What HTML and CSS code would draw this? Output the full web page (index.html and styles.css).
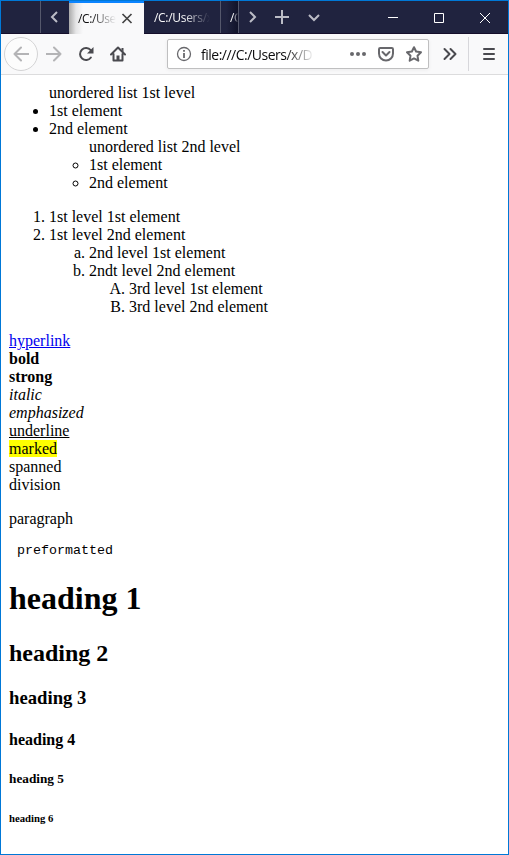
FILE: index.html
```html
<!DOCTYPE html>
<html lang="en">
<head>
<meta charset="utf-8">
<title>HTML elements</title>
<link rel="stylesheet" href="styles.css">
</head>
<body>
<div class="window">
  <header class="tabbar">
    <div class="drag"></div>
    <button class="scroll-left"><svg width="28" height="32" viewBox="0 0 28 32"><path d="M16 11l-5 5 5 5"/></svg></button>
    <div class="tab active"><span class="label">/C:/Use</span><svg width="12" height="12" viewBox="0 0 12 12"><path d="M1.500 1l9 9M10.500 1l-9 9"/></svg></div>
    <div class="tab second"><span class="label">/C:/Users/x</span></div>
    <div class="tab third"><span class="label">/C</span></div>
    <button class="scroll-right"><svg width="28" height="32" viewBox="0 0 28 32"><path d="M11 11l5 5-5 5"/></svg></button>
    <button class="tab-tool"><svg width="32" height="32" viewBox="0 0 32 32"><path d="M15 9v14M8 16h14"/></svg></button>
    <button class="tab-tool"><svg width="32" height="32" viewBox="0 0 32 32"><path d="M10 14l5 5 5-5"/></svg></button>
    <div class="controls">
      <button><svg width="46" height="32" viewBox="0 0 46 32"><path d="M18 16.500h10"/></svg></button>
      <button><svg width="46" height="32" viewBox="0 0 46 32"><path d="M18.500 12.500h9v9h-9z"/></svg></button>
      <button><svg width="46" height="32" viewBox="0 0 46 32"><path d="M18 12l10 10M28 12l-10 10"/></svg></button>
    </div>
  </header>

  <nav class="toolbar">
    <button class="back"><svg width="16" height="16" viewBox="0 0 16 16"><path d="M15.500 8H1.500M8 1.500L1.500 8 8 14.500"/></svg></button>
    <button class="tool dim"><svg width="16" height="16" viewBox="0 0 16 16"><path d="M.5 8h14M8 1.500L14.500 8 8 14.500"/></svg></button>
    <button class="tool"><svg width="16" height="16" viewBox="0 0 16 16"><path d="M12.900 11.500A6 6 0 1 1 12.700 4.200"/><path class="solid" d="M15.500 1v6.500H9z"/></svg></button>
    <button class="tool"><svg width="16" height="16" viewBox="0 0 16 16"><path d="M1 8.500L8 1.500l7 7M3.500 8v6.500h9V8"/><path class="solid" d="M6.500 9.500h3V15h-3zM11.500 2h2v4l-2-2z"/></svg></button>
    <div class="urlbar">
      <svg class="info" width="16" height="16" viewBox="0 0 16 16"><circle cx="8" cy="8" r="6.500"/><path d="M8 7v5M8 4v1.800"/></svg>
      <span class="address">file:///C:/Users/x/D</span>
      <svg class="dots" width="16" height="16" viewBox="0 0 16 16"><circle cx="2" cy="8" r="2"/><circle cx="8" cy="8" r="2"/><circle cx="14" cy="8" r="2"/></svg>
      <svg width="16" height="16" viewBox="0 0 16 16"><path d="M2.200 2h11.600q1.200 0 1.200 1.200V7.500a7 7 0 0 1-14 0V3.200Q1 2 2.200 2z"/><path d="M4.500 6L8 9.500 11.500 6"/></svg>
      <svg width="16" height="16" viewBox="0 0 16 16"><path d="M8 1.200l2.100 4.300 4.900.7-3.500 3.500.8 5L8 12.400l-4.300 2.300.8-5L1 6.200l4.900-.7z"/></svg>
    </div>
    <button class="overflow"><svg width="16" height="16" viewBox="0 0 16 16"><path d="M2.500 3L7.500 8l-5 5M8.500 3l5 5-5 5"/></svg></button>
    <button class="menu"><svg width="16" height="16" viewBox="0 0 16 16"><path d="M3 3h10M3 8h10M3 13h10"/></svg></button>
  </nav>

  <main class="page">
    <ul>
      unordered list 1st level
      <li>1st element</li>
      <li>2nd element
        <ul>
          unordered list 2nd level
          <li>1st element</li>
          <li>2nd element</li>
        </ul>
      </li>
    </ul>
    <ol>
      <li>1st level 1st element</li>
      <li>1st level 2nd element
        <ol type="a">
          <li>2nd level 1st element</li>
          <li>2ndt level 2nd element
            <ol type="A">
              <li>3rd level 1st element</li>
              <li>3rd level 2nd element</li>
            </ol>
          </li>
        </ol>
      </li>
    </ol>
    <a href="#">hyperlink</a><br>
    <b>bold</b><br>
    <strong>strong</strong><br>
    <i>italic</i><br>
    <em>emphasized</em><br>
    <u>underline</u><br>
    <mark>marked</mark><br>
    <span>spanned</span>
    <div>division</div>
    <p>paragraph</p>
    <pre> preformatted</pre>
    <h1>heading 1</h1>
    <h2>heading 2</h2>
    <h3>heading 3</h3>
    <h4>heading 4</h4>
    <h5>heading 5</h5>
    <h6>heading 6</h6>
  </main>
</div>
</body>
</html>
```
FILE: styles.css
```css
* { box-sizing: border-box; }
body { margin: 0; }
.window {
  display: flex;
  flex-direction: column;
  width: 509px;
  height: 855px;
  border: 1px solid #0078d7;
  background: #fff;
  overflow: hidden;
}
svg { display: block; flex: none; fill: none; stroke: currentColor; }
button { border: 0; padding: 0; background: none; color: inherit; }

.tabbar {
  display: flex;
  flex: none;
  height: 33px;
  background: #20233f;
  border-bottom: 1px solid #150f2b;
  color: #bbbcc6;
  font: 12px "Open Sans", "Noto Sans", sans-serif;
}
.tabbar svg { stroke-width: 2; }
.drag { width: 40px; border-right: 1px solid #55586c; }
.scroll-left { width: 28px; }
.tab { display: flex; align-items: center; }
.label {
  flex: none;
  white-space: nowrap;
  letter-spacing: -0.3px;
}
.tab.active {
  width: 75px;
  height: 33px;
  padding: 0 11px 0 9px;
  justify-content: space-between;
  border-top: 2px solid #0a84ff;
  background: linear-gradient(90deg, #aaa, #e6e6e7 7px, #f9f9fa 14px);
  color: #0c0c0d;
}
.tab.active .label {
  letter-spacing: -0.4px;
  -webkit-mask-image: linear-gradient(90deg, #000 35%, transparent);
  mask-image: linear-gradient(90deg, #000 35%, transparent);
}
.tab.active svg { color: #444; stroke-width: 1.7; }
.tab.second {
  width: 77px;
  padding-left: 10px;
  border-right: 1px solid #55586c;
  color: #f9f9fa;
}
.tab.second .label {
  -webkit-mask-image: linear-gradient(90deg, #000 50%, transparent 95%);
  mask-image: linear-gradient(90deg, #000 50%, transparent 95%);
}
.tab.third {
  width: 18px;
  padding-left: 9px;
  border-right: 1px solid #55586c;
  background: linear-gradient(90deg, #20233f 30%, #11132a);
  color: #f9f9fa;
}
.tab.third .label {
  width: 8px;
  overflow: hidden;
  -webkit-mask-image: linear-gradient(90deg, #000 40%, transparent);
  mask-image: linear-gradient(90deg, #000 40%, transparent);
}
.scroll-right { width: 28px; }
.tab-tool { width: 32px; }
.controls { display: flex; margin-left: auto; color: #fff; }
.controls svg { stroke-width: 1; }

.toolbar {
  display: flex;
  align-items: center;
  flex: none;
  height: 41px;
  padding: 0 0 0 3px;
  background: #f9f9fa;
  border-bottom: 1px solid #dcdcdd;
  color: #4a4a4f;
}
.toolbar svg { stroke-width: 2; stroke-linecap: round; stroke-linejoin: round; }
.toolbar button { display: flex; align-items: center; justify-content: center; flex: none; }
.back {
  width: 34px;
  height: 34px;
  color: #b4b4b6;
}
.toolbar .back {
  border: 1px solid #d4d4d5;
  border-radius: 50%;
  background: #fcfcfc;
  color: #b4b4b6;
}
.tool { width: 32px; height: 32px; }
.toolbar .dim { color: #b4b4b6; }
.toolbar .solid { fill: currentColor; stroke: none; }
.urlbar {
  display: flex;
  align-items: center;
  flex: none;
  gap: 12px;
  width: 262px;
  height: 30px;
  margin-left: 33px;
  padding: 0 6px 0 8px;
  border: 1px solid #bfbfc0;
  border-radius: 2px;
  background: #fff;
  box-shadow: 0 1px 4px rgba(0, 0, 0, .06);
  color: #68686c;
}
.toolbar .info { stroke-width: 1.3; }
.toolbar .info path { stroke-width: 1.8; stroke-linecap: butt; }
.toolbar .dots { fill: currentColor; stroke: none; }
.address {
  flex: none;
  width: 113px;
  margin: 1px auto 0 -3px;
  white-space: nowrap;
  color: #0c0c0d;
  font: 14px/20px "Open Sans", "Noto Sans", sans-serif;
  letter-spacing: -0.5px;
  -webkit-mask-image: linear-gradient(90deg, #000 75%, transparent);
  mask-image: linear-gradient(90deg, #000 75%, transparent);
}
.overflow { width: 34px; height: 34px; margin-left: 4px; }
.menu { width: 40px; height: 34px; margin-left: 1px; }
.toolbar .menu { border-left: 1px solid #d7d7db; }

.page {
  padding: 9px 8px 0;
  color: #000;
  font: 16px/18px "Liberation Serif", "Times New Roman", serif;
}
.page > ul { margin-top: 0; }
a { color: #0000ee; }
a, u { text-underline-offset: 1px; }
mark { background: #ff0; }
p { margin: 16px 0 0; }
pre { margin: 15px 0 0; font: 13.33px/15px "Liberation Mono", "Courier New", monospace; }
h1 { font-size: 32px; line-height: 37px; margin: 22px 0 0; }
h2 { font-size: 24px; line-height: 27px; margin: 23px 0 0; }
h3 { font-size: 18.72px; line-height: 22px; margin: 20px 0 0; }
h4 { font-size: 16px; line-height: 18px; margin: 22px 0 0; }
h5 { font-size: 13.28px; line-height: 16px; margin: 22px 0 0; }
h6 { font-size: 10.72px; line-height: 12px; margin: 25px 0 0; }
```
